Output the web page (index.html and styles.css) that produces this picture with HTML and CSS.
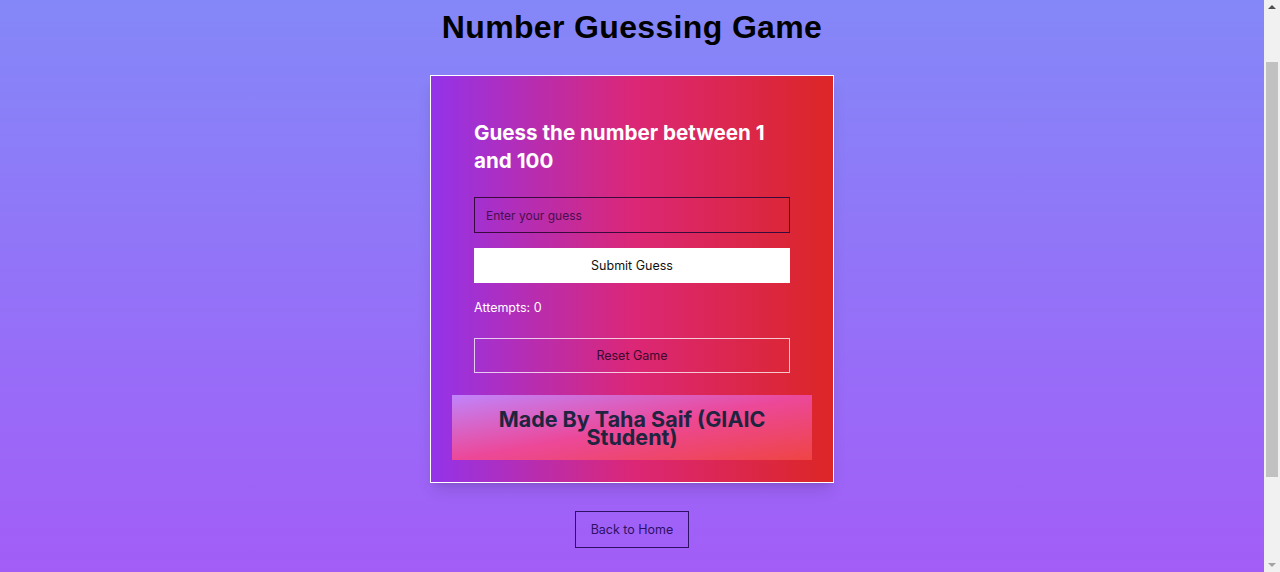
FILE: index.html
```html
<!DOCTYPE html>
<html lang="en">
<head>
<meta charset="utf-8">
<title>Number Guessing Game</title>
<link rel="stylesheet" href="styles.css">
</head>
<body>
<main class="page">
  <h1 class="title">Number Guessing Game</h1>
  <section class="card">
    <h2 class="prompt">Guess the number between 1 and 100</h2>
    <input class="guess-input" type="text" placeholder="Enter your guess">
    <button class="btn-submit" type="button">Submit Guess</button>
    <p class="attempts">Attempts: 0</p>
    <button class="btn-reset" type="button">Reset Game</button>
    <div class="credit">Made By Taha Saif (GIAIC Student)</div>
  </section>
  <a class="btn-home" href="#">Back to Home</a>
</main>
<div class="scrollbar" aria-hidden="true">
  <span class="sb-arrow sb-up"></span>
  <span class="sb-thumb"></span>
  <span class="sb-arrow sb-down"></span>
</div>
<script src="script.js"></script>
</body>
</html>
```

FILE: styles.css
```css
* { box-sizing: border-box; }
html, body { margin: 0; padding: 0; }
body {
  background: linear-gradient(to bottom, #818cf8, #a855f7);
  min-height: 745px;
  font-family: Inter, "Noto Sans", sans-serif;
}
.page {
  display: flex;
  flex-direction: column;
  align-items: center;
  padding: 70px 16px 135px 0;
}
.title {
  margin: 0;
  font-family: "Liberation Sans", Arial, sans-serif;
  font-weight: 700;
  font-size: 32px;
  line-height: 40px;
  letter-spacing: 0.35px;
  color: #000;
}
.card {
  margin-top: 28px;
  width: 404px;
  padding: 43px 43px 22px;
  border: 1px solid #fff;
  background: linear-gradient(to right, #9333ea, #db2777, #dc2626);
  box-shadow: 0 10px 15px -3px rgba(0,0,0,.12), 0 4px 6px -4px rgba(0,0,0,.12);
  display: flex;
  flex-direction: column;
}
.prompt {
  margin: 0 0 22px;
  font-size: 20.6px;
  line-height: 28px;
  font-weight: 700;
  color: #fff;
}
.guess-input {
  height: 36px;
  padding: 0 11px;
  border: 1px solid #3a0a3c;
  background: transparent;
  font-family: inherit;
  font-size: 12px;
  color: #4a0e4e;
  outline: none;
}
.guess-input::placeholder { color: #4a0e4e; }
.btn-submit {
  margin-top: 15px;
  height: 35px;
  border: none;
  background: #fff;
  color: #111;
  font-family: inherit;
  font-size: 12.5px;
}
.attempts {
  margin: 17px 0 0;
  font-size: 12.5px;
  line-height: 16px;
  color: #fff;
}
.btn-reset {
  margin-top: 22px;
  height: 35px;
  border: 1px solid rgba(255,255,255,.75);
  background: transparent;
  color: #3b0a2e;
  font-family: inherit;
  font-size: 12.5px;
}
.credit {
  margin: 22px -22px 0;
  height: 65px;
  padding: 15px 36px 0;
  background: linear-gradient(to bottom right, #c084fc, #ec4899, #ef4444);
  color: #1f2440;
  font-size: 21.5px;
  font-weight: 700;
  line-height: 18px;
  text-align: center;
}
.btn-home {
  margin-top: 28px;
  width: 114px;
  height: 37px;
  border: 1px solid #2e1065;
  color: #2e1065;
  font-size: 12.5px;
  text-decoration: none;
  display: flex;
  align-items: center;
  justify-content: center;
}
.scrollbar {
  position: fixed;
  top: 0;
  right: 0;
  width: 16px;
  height: 100vh;
  background: #f1f1f1;
}
.sb-thumb {
  position: absolute;
  left: 2px;
  right: 2px;
  top: 62px;
  height: 415px;
  background: #c1c1c1;
}
.sb-arrow {
  position: absolute;
  left: 4px;
  width: 0;
  height: 0;
  border-left: 4px solid transparent;
  border-right: 4px solid transparent;
}
.sb-up {
  top: 5px;
  border-bottom: 4px solid #505050;
}
.sb-down {
  bottom: 5px;
  border-top: 4px solid #a3a3a3;
}
```

FILE: script.js
```js
window.scrollTo(0, 63);
```
